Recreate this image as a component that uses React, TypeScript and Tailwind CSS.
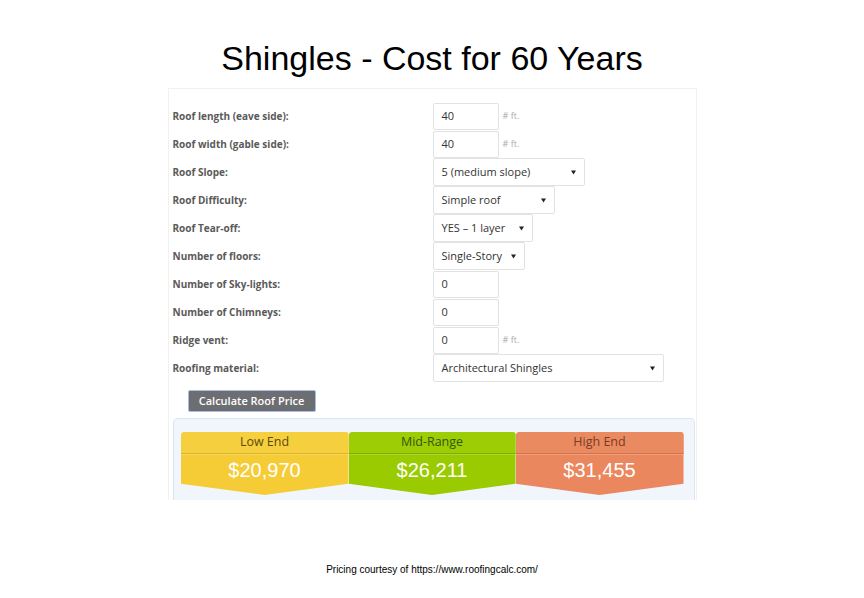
import React from "react";

const Caret = () => (
  <svg width="5" height="5" viewBox="0 0 5 5" className="shrink-0">
    <path d="M0 0.5 L5 0.5 L2.5 4.5 Z" fill="#222" />
  </svg>
);

type Row = {
  label: string;
  kind: "input" | "select";
  value: string;
  width?: string;
  unit?: boolean;
};

const rows: Row[] = [
  { label: "Roof length (eave side):", kind: "input", value: "40", unit: true },
  { label: "Roof width (gable side):", kind: "input", value: "40", unit: true },
  { label: "Roof Slope:", kind: "select", value: "5 (medium slope)", width: "w-[152px]" },
  { label: "Roof Difficulty:", kind: "select", value: "Simple roof", width: "w-[122px]" },
  { label: "Roof Tear-off:", kind: "select", value: "YES \u2013 1 layer", width: "w-[100px]" },
  { label: "Number of floors:", kind: "select", value: "Single-Story", width: "w-[92px]" },
  { label: "Number of Sky-lights:", kind: "input", value: "0" },
  { label: "Number of Chimneys:", kind: "input", value: "0" },
  { label: "Ridge vent:", kind: "input", value: "0", unit: true },
  { label: "Roofing material:", kind: "select", value: "Architectural Shingles", width: "w-[231px]" },
];

const os = "font-['Open_Sans',sans-serif]";

export default function App() {
  return (
    <div className="w-[864px] h-[598px] bg-white flex flex-col items-center">
      <h1 className="pt-[41px] text-[34px] leading-none text-black font-['Liberation_Sans',Arial,sans-serif]">
        Shingles - Cost for 60 Years
      </h1>
      <div className="mt-[13px] w-[529px] h-[412px] border border-b-0 border-[#f1f1f1] pl-[4px] pt-[13px] flex flex-col">
        {rows.map((r) => (
          <div key={r.label} className="h-[28px] flex items-center">
            <div className={`w-[260px] text-[10px] font-bold text-[#5a5a5a] ${os}`}>{r.label}</div>
            {r.kind === "input" ? (
              <div className="flex items-center">
                <div
                  className={`w-[66px] h-[27px] border border-[#e2e2e2] rounded-[2px] flex items-center pl-[8px] text-[11px] text-[#333] ${os}`}
                >
                  {r.value}
                </div>
                {r.unit && (
                  <span className={`ml-[4px] text-[9px] text-[#aaa] ${os}`}># ft.</span>
                )}
              </div>
            ) : (
              <div
                className={`${r.width} h-[28px] border border-[#e2e2e2] rounded-[2px] flex items-center justify-between pl-[8px] pr-[8px] text-[11px] text-[#333] ${os}`}
              >
                <span>{r.value}</span>
                <Caret />
              </div>
            )}
          </div>
        ))}
        <div
          className={`mt-[8px] ml-[15px] w-[128px] h-[22px] bg-[#6d6e72] border border-[#a9bde0] rounded-[2px] flex items-center justify-center text-white text-[11px] font-semibold ${os}`}
        >
          Calculate Roof Price
        </div>
        <div className="mt-[6px] w-[522px] flex-1 bg-[#f0f6fc] border border-b-0 border-[#dbe5ef] rounded-t-[5px] pl-[7px] pt-[13px] flex">
          <Card
            title="Low End"
            value="$20,970"
            bg="bg-[#f5cc36]"
            head="bg-[#f6cf3e]"
            line="border-[#dcb52a]"
            text="text-[#5b4a0e]"
            w="w-[168px]"
          />
          <Card
            title="Mid-Range"
            value="$26,211"
            bg="bg-[#9acb00]"
            head="bg-[#9ccd05]"
            line="border-[#82ad00]"
            text="text-[#38550a]"
            w="w-[167px]"
          />
          <Card
            title="High End"
            value="$31,455"
            bg="bg-[#ea875e]"
            head="bg-[#ea8a61]"
            line="border-[#d3734c]"
            text="text-[#7a3b25]"
            w="w-[168px]"
          />
        </div>
      </div>
      <div className="mt-[65px] text-[10px] leading-none text-black font-['Liberation_Sans',Arial,sans-serif]">
        Pricing courtesy of https://www.roofingcalc.com/
      </div>
    </div>
  );
}

function Card(props: {
  title: string;
  value: string;
  bg: string;
  head: string;
  line: string;
  text: string;
  w: string;
}) {
  return (
    <div
      className={`${props.w} h-[63px] ${props.bg} rounded-t-[4px] overflow-hidden [clip-path:polygon(0_0,100%_0,100%_82%,50%_100%,0_82%)] flex flex-col`}
    >
      <div
        className={`h-[22px] ${props.head} border-b ${props.line} flex items-center justify-center text-[12.5px] ${props.text} ${os}`}
      >
        {props.title}
      </div>
      <div className="border-t border-white/20 pt-[2px] text-center text-white text-[20px] leading-[26px] font-['Liberation_Sans',Arial,sans-serif]">
        {props.value}
      </div>
    </div>
  );
}
